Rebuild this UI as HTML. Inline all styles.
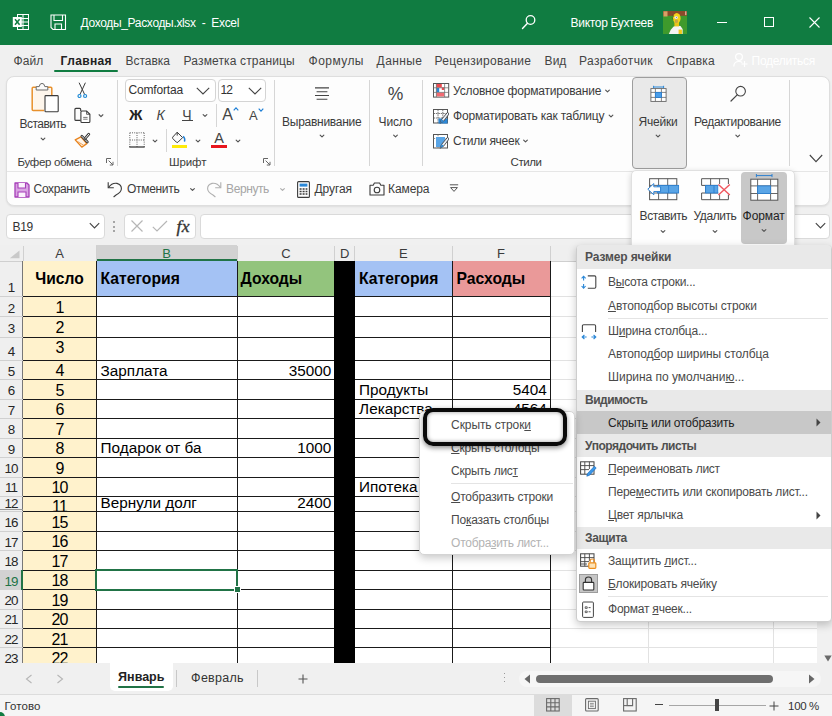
<!DOCTYPE html>
<html><head><meta charset="utf-8"><title>Excel</title>
<style>
html,body{margin:0;padding:0;}
body{width:832px;height:716px;overflow:hidden;position:relative;background:#f0f0f0;font-family:'Liberation Sans',sans-serif;}
.t{position:absolute;white-space:pre;}
u{text-decoration:underline;text-underline-offset:1px;}
</style></head><body>
<div style="position:absolute;left:0px;top:0px;width:832px;height:45px;background:#107c41;"></div>
<svg style="position:absolute;left:12px;top:13px;" width="18" height="18" viewBox="0 0 18 18">
<rect x="5.5" y="1.5" width="11" height="15" fill="none" stroke="#fff" stroke-width="1"/>
<path d="M5.5 5.5H16.5M5.5 9H16.5M5.5 12.5H16.5M11 1.5V16.5" stroke="#fff" stroke-width="1" fill="none"/>
<rect x="0.8" y="4" width="9" height="10" fill="#fff"/>
<path d="M3 6.2L7.6 11.8M7.6 6.2L3 11.8" stroke="#107c41" stroke-width="1.5" fill="none"/>
</svg>
<svg style="position:absolute;left:50px;top:14px;" width="17" height="17" viewBox="0 0 17 17">
<path d="M1 1H15.5V15.5H3L1 13.5Z" fill="none" stroke="#fff" stroke-width="1.1"/>
<path d="M4 1V6.5H12.5V1" fill="none" stroke="#fff" stroke-width="1.1"/>
<path d="M5 15.5V10H11.5V15.5" fill="none" stroke="#fff" stroke-width="1.1"/>
</svg>
<span class="t" style="left:80.6px;top:14.8px;font-size:12px;line-height:16px;color:#fff;letter-spacing:-0.34px;">Доходы_Расходы.xlsx  -  Excel</span>
<svg style="position:absolute;left:521px;top:14px;" width="16" height="16" viewBox="0 0 16 16"><circle cx="9.5" cy="6" r="4.3" fill="none" stroke="#fff" stroke-width="1.3"/><path d="M6.5 9.2L1.5 14.5" stroke="#fff" stroke-width="1.4" stroke-linecap="round"/></svg>
<span class="t" style="left:570.6px;top:14.8px;font-size:12px;line-height:16px;color:#fff;letter-spacing:-0.31px;">Виктор Бухтеев</span>
<svg style="position:absolute;left:663px;top:11px;" width="24" height="23" viewBox="0 0 24 23">
<rect width="24" height="23" fill="#3f9a2c"/>
<rect width="24" height="4.8" fill="#8a4a2a"/>
<rect x="0.5" y="0.3" width="4" height="5.2" fill="#d9a066"/>
<rect x="22" y="0.3" width="1.5" height="3.8" fill="#d9a890"/>
<path d="M5.9 23 L7.6 19 L10.4 15.8 L13 14.4 L17.5 15 L19.6 18 L19.6 23Z" fill="#f4f4f4"/>
<rect x="11.4" y="9" width="4.6" height="6.4" fill="#e8c419"/>
<ellipse cx="13.8" cy="7.2" rx="3.8" ry="5.2" fill="#f3d21b"/>
<ellipse cx="13.2" cy="6.6" rx="1.8" ry="1.4" fill="#e9e9f5"/>
<circle cx="13.6" cy="6.6" r="0.5" fill="#5566aa"/>
<rect x="11.8" y="8.4" width="3.2" height="3.8" rx="1.4" fill="#c9a640"/>
<rect x="15.6" y="18.6" width="3.3" height="4.4" fill="#efc81a"/>
<path d="M9.6 3.5L10.6 6M9 6.5L10 8.5" stroke="#5a3a1a" stroke-width="0.5"/>
</svg>
<div style="position:absolute;left:717px;top:22px;width:10px;height:1px;background:#fff;"></div>
<div style="position:absolute;left:764px;top:17px;width:9px;height:9px;border:1px solid #fff;box-sizing:border-box;width:10px;height:10px;"></div>
<svg style="position:absolute;left:809px;top:17px;" width="11" height="11" viewBox="0 0 11 11"><path d="M0.5 0.5L10.5 10.5M10.5 0.5L0.5 10.5" stroke="#fff" stroke-width="1.1"/></svg>
<span class="t" style="left:13.6px;top:52.8px;font-size:12px;line-height:16px;color:#444;letter-spacing:0.07px;">Файл</span>
<span class="t" style="left:60.6px;top:52.8px;font-size:12px;line-height:16px;color:#222;letter-spacing:0.36px;font-weight:700;">Главная</span>
<div style="position:absolute;left:54px;top:70px;width:64px;height:2px;background:#107c41;border-radius:1px;"></div>
<span class="t" style="left:125.6px;top:52.8px;font-size:12px;line-height:16px;color:#444;letter-spacing:-0.04px;">Вставка</span>
<span class="t" style="left:183.6px;top:52.8px;font-size:12px;line-height:16px;color:#444;letter-spacing:0.14px;">Разметка страницы</span>
<span class="t" style="left:308.6px;top:52.8px;font-size:12px;line-height:16px;color:#444;letter-spacing:0.44px;">Формулы</span>
<span class="t" style="left:376.6px;top:52.8px;font-size:12px;line-height:16px;color:#444;letter-spacing:0.41px;">Данные</span>
<span class="t" style="left:434.6px;top:52.8px;font-size:12px;line-height:16px;color:#444;letter-spacing:0.29px;">Рецензирование</span>
<span class="t" style="left:544.6px;top:52.8px;font-size:12px;line-height:16px;color:#444;letter-spacing:0.03px;">Вид</span>
<span class="t" style="left:579.1px;top:52.8px;font-size:12px;line-height:16px;color:#444;letter-spacing:0.35px;">Разработчик</span>
<span class="t" style="left:666.6px;top:52.8px;font-size:12px;line-height:16px;color:#444;letter-spacing:0.17px;">Справка</span>
<svg style="position:absolute;left:733px;top:52px;" width="16" height="16" viewBox="0 0 16 16"><circle cx="6" cy="5" r="3.4" fill="none" stroke="#fff" stroke-width="1.2"/><path d="M0.8 14.5C0.8 10.5 3 9.5 6 9.5C7.5 9.5 8.5 9.8 9.3 10.4" fill="none" stroke="#fff" stroke-width="1.2"/><path d="M11.5 9V15M8.5 12H14.5" stroke="#fff" stroke-width="1.2"/></svg>
<span class="t" style="left:751.6px;top:52.8px;font-size:12px;line-height:16px;color:#fff;letter-spacing:-0.30px;">Поделиться</span>
<div style="position:absolute;left:6px;top:75.6px;width:824px;height:130px;background:#fdfdfd;border:1px solid #dedede;border-radius:8px;box-sizing:border-box;box-shadow:0 1px 2px rgba(0,0,0,0.08);"></div>
<div style="position:absolute;left:7px;top:171px;width:821px;height:1px;background:#e6e6e6;"></div>
<div style="position:absolute;left:116.5px;top:80px;width:1px;height:86px;background:#d6d6d6;"></div>
<div style="position:absolute;left:274px;top:80px;width:1px;height:86px;background:#d6d6d6;"></div>
<div style="position:absolute;left:369px;top:80px;width:1px;height:86px;background:#d6d6d6;"></div>
<div style="position:absolute;left:421.5px;top:80px;width:1px;height:86px;background:#d6d6d6;"></div>
<div style="position:absolute;left:788.5px;top:80px;width:1px;height:86px;background:#d6d6d6;"></div>
<div style="position:absolute;left:5.8px;top:213.5px;width:99px;height:25px;border:1px solid #dadada;border-radius:4px;background:#fff;box-sizing:border-box;"></div>
<span class="t" style="left:12.6px;top:218.6px;font-size:12px;line-height:16px;color:#333;letter-spacing:-0.35px;">B19</span>
<svg style="position:absolute;left:89px;top:222px;" width="11" height="8" viewBox="0 0 11 8"><path d="M0.8 1.2L5.5 6L10.2 1.2" fill="none" stroke="#444" stroke-width="1.1"/></svg>
<div style="position:absolute;left:113.2px;top:221px;width:2px;height:2px;background:#8c8c8c;border-radius:1px;"></div>
<div style="position:absolute;left:113.2px;top:225.5px;width:2px;height:2px;background:#8c8c8c;border-radius:1px;"></div>
<div style="position:absolute;left:113.2px;top:230px;width:2px;height:2px;background:#8c8c8c;border-radius:1px;"></div>
<div style="position:absolute;left:124px;top:213.5px;width:71.5px;height:25px;border:1px solid #dadada;border-radius:4px;background:#fff;box-sizing:border-box;"></div>
<svg style="position:absolute;left:131px;top:220px;" width="12" height="12" viewBox="0 0 12 12"><path d="M0.5 0.5L11.5 11.5M11.5 0.5L0.5 11.5" stroke="#b6b6b6" stroke-width="1.2"/></svg>
<svg style="position:absolute;left:152px;top:220px;" width="16" height="12" viewBox="0 0 16 12"><path d="M0.8 6.8L5 11L15 1" fill="none" stroke="#b6b6b6" stroke-width="1.2"/></svg>
<span class="t" style="left:176.6px;top:215.8px;font-size:17.6px;line-height:20px;color:#333;letter-spacing:0.00px;font-style:italic;font-family:'Liberation Serif',serif;letter-spacing:0.2px;-webkit-text-stroke:0.35px #333;">fx</span>
<div style="position:absolute;left:199.5px;top:213.5px;width:630px;height:25px;border:1px solid #dadada;border-radius:4px;background:#fff;box-sizing:border-box;"></div>
<svg style="position:absolute;left:815px;top:222px;" width="11" height="8" viewBox="0 0 11 8"><path d="M0.8 1.2L5.5 6L10.2 1.2" fill="none" stroke="#444" stroke-width="1.1"/></svg>
<div style="position:absolute;left:0px;top:245px;width:832px;height:418.4px;background:#fff;"></div>
<div style="position:absolute;left:0px;top:245px;width:832px;height:16px;background:#efefef;"></div>
<div style="position:absolute;left:0px;top:261px;width:23px;height:402.4px;background:#efefef;"></div>
<svg style="position:absolute;left:9px;top:250px;" width="11" height="9" viewBox="0 0 11 9"><path d="M10.5 0.5V8.2H0.8Z" fill="#c9c9c9"/></svg>
<div style="position:absolute;left:96px;top:245px;width:141px;height:16px;background:#d2d2d2;border-bottom:2px solid #217346;box-sizing:border-box;"></div>
<div style="position:absolute;left:95.5px;top:246px;width:1px;height:15px;background:#d0d0d0;"></div>
<div style="position:absolute;left:236.5px;top:246px;width:1px;height:15px;background:#d0d0d0;"></div>
<div style="position:absolute;left:334.0px;top:246px;width:1px;height:15px;background:#d0d0d0;"></div>
<div style="position:absolute;left:354.0px;top:246px;width:1px;height:15px;background:#d0d0d0;"></div>
<div style="position:absolute;left:451.5px;top:246px;width:1px;height:15px;background:#d0d0d0;"></div>
<div style="position:absolute;left:549.5px;top:246px;width:1px;height:15px;background:#d0d0d0;"></div>
<div style="position:absolute;left:647.5px;top:246px;width:1px;height:15px;background:#d0d0d0;"></div>
<div style="position:absolute;left:773.0px;top:246px;width:1px;height:15px;background:#d0d0d0;"></div>
<div style="position:absolute;left:899.5px;top:246px;width:1px;height:15px;background:#d0d0d0;"></div>
<div style="position:absolute;left:22.5px;top:246px;width:1px;height:15px;background:#d0d0d0;"></div>
<div style="position:absolute;left:0px;top:260.5px;width:832px;height:1px;background:#cfcfcf;"></div>
<span class="t" style="left:54.6px;top:245.6px;font-size:13px;line-height:16px;color:#3b3b3b;letter-spacing:0.00px;width:10px;text-align:center;">A</span>
<span class="t" style="left:161.6px;top:245.6px;font-size:13px;line-height:16px;color:#217346;letter-spacing:0.00px;width:10px;text-align:center;">B</span>
<span class="t" style="left:280.9px;top:245.6px;font-size:13px;line-height:16px;color:#3b3b3b;letter-spacing:0.00px;width:10px;text-align:center;">C</span>
<span class="t" style="left:339.6px;top:245.6px;font-size:13px;line-height:16px;color:#3b3b3b;letter-spacing:0.00px;width:10px;text-align:center;">D</span>
<span class="t" style="left:398.4px;top:245.6px;font-size:13px;line-height:16px;color:#3b3b3b;letter-spacing:0.00px;width:10px;text-align:center;">E</span>
<span class="t" style="left:496.1px;top:245.6px;font-size:13px;line-height:16px;color:#3b3b3b;letter-spacing:0.00px;width:10px;text-align:center;">F</span>
<div style="position:absolute;left:647.5px;top:261px;width:1px;height:402.4px;background:#e2e2e2;"></div>
<div style="position:absolute;left:773.0px;top:261px;width:1px;height:402.4px;background:#e2e2e2;"></div>
<div style="position:absolute;left:899.5px;top:261px;width:1px;height:402.4px;background:#e2e2e2;"></div>
<div style="position:absolute;left:550px;top:295.9px;width:282px;height:1px;background:#e2e2e2;"></div>
<div style="position:absolute;left:550px;top:316.2px;width:282px;height:1px;background:#e2e2e2;"></div>
<div style="position:absolute;left:550px;top:336.6px;width:282px;height:1px;background:#e2e2e2;"></div>
<div style="position:absolute;left:550px;top:359.8px;width:282px;height:1px;background:#e2e2e2;"></div>
<div style="position:absolute;left:550px;top:379.3px;width:282px;height:1px;background:#e2e2e2;"></div>
<div style="position:absolute;left:550px;top:398.8px;width:282px;height:1px;background:#e2e2e2;"></div>
<div style="position:absolute;left:550px;top:418.2px;width:282px;height:1px;background:#e2e2e2;"></div>
<div style="position:absolute;left:550px;top:437.7px;width:282px;height:1px;background:#e2e2e2;"></div>
<div style="position:absolute;left:550px;top:457.2px;width:282px;height:1px;background:#e2e2e2;"></div>
<div style="position:absolute;left:550px;top:476.5px;width:282px;height:1px;background:#e2e2e2;"></div>
<div style="position:absolute;left:550px;top:495.8px;width:282px;height:1px;background:#e2e2e2;"></div>
<div style="position:absolute;left:550px;top:511.2px;width:282px;height:1px;background:#e2e2e2;"></div>
<div style="position:absolute;left:550px;top:530.8px;width:282px;height:1px;background:#e2e2e2;"></div>
<div style="position:absolute;left:550px;top:550.3px;width:282px;height:1px;background:#e2e2e2;"></div>
<div style="position:absolute;left:550px;top:569.7px;width:282px;height:1px;background:#e2e2e2;"></div>
<div style="position:absolute;left:550px;top:589.2px;width:282px;height:1px;background:#e2e2e2;"></div>
<div style="position:absolute;left:550px;top:608.6px;width:282px;height:1px;background:#e2e2e2;"></div>
<div style="position:absolute;left:550px;top:628.0px;width:282px;height:1px;background:#e2e2e2;"></div>
<div style="position:absolute;left:550px;top:647.1px;width:282px;height:1px;background:#e2e2e2;"></div>
<div style="position:absolute;left:550px;top:666.5px;width:282px;height:1px;background:#e2e2e2;"></div>
<div style="position:absolute;left:23px;top:261px;width:73px;height:402.4px;background:#fff2cc;"></div>
<div style="position:absolute;left:96px;top:261px;width:141px;height:35px;background:#a4c2f4;"></div>
<div style="position:absolute;left:237px;top:261px;width:97.5px;height:35px;background:#93c47d;"></div>
<div style="position:absolute;left:354.5px;top:261px;width:97.5px;height:35px;background:#a4c2f4;"></div>
<div style="position:absolute;left:452px;top:261px;width:98px;height:35px;background:#ea9999;"></div>
<div style="position:absolute;left:23px;top:295.9px;width:527.5px;height:1px;background:#1a1a1a;"></div>
<div style="position:absolute;left:23px;top:316.2px;width:527.5px;height:1px;background:#1a1a1a;"></div>
<div style="position:absolute;left:23px;top:336.6px;width:527.5px;height:1px;background:#1a1a1a;"></div>
<div style="position:absolute;left:23px;top:359.8px;width:527.5px;height:1px;background:#1a1a1a;"></div>
<div style="position:absolute;left:23px;top:379.3px;width:527.5px;height:1px;background:#1a1a1a;"></div>
<div style="position:absolute;left:23px;top:398.8px;width:527.5px;height:1px;background:#1a1a1a;"></div>
<div style="position:absolute;left:23px;top:418.2px;width:527.5px;height:1px;background:#1a1a1a;"></div>
<div style="position:absolute;left:23px;top:437.7px;width:527.5px;height:1px;background:#1a1a1a;"></div>
<div style="position:absolute;left:23px;top:457.2px;width:527.5px;height:1px;background:#1a1a1a;"></div>
<div style="position:absolute;left:23px;top:476.5px;width:527.5px;height:1px;background:#1a1a1a;"></div>
<div style="position:absolute;left:23px;top:495.8px;width:527.5px;height:1px;background:#1a1a1a;"></div>
<div style="position:absolute;left:23px;top:511.2px;width:527.5px;height:1px;background:#1a1a1a;"></div>
<div style="position:absolute;left:23px;top:530.8px;width:527.5px;height:1px;background:#1a1a1a;"></div>
<div style="position:absolute;left:23px;top:550.3px;width:527.5px;height:1px;background:#1a1a1a;"></div>
<div style="position:absolute;left:23px;top:569.7px;width:527.5px;height:1px;background:#1a1a1a;"></div>
<div style="position:absolute;left:23px;top:589.2px;width:527.5px;height:1px;background:#1a1a1a;"></div>
<div style="position:absolute;left:23px;top:608.6px;width:527.5px;height:1px;background:#1a1a1a;"></div>
<div style="position:absolute;left:23px;top:628.0px;width:527.5px;height:1px;background:#1a1a1a;"></div>
<div style="position:absolute;left:23px;top:647.1px;width:527.5px;height:1px;background:#1a1a1a;"></div>
<div style="position:absolute;left:95.5px;top:261px;width:1px;height:402.4px;background:#1a1a1a;"></div>
<div style="position:absolute;left:236.5px;top:261px;width:1px;height:402.4px;background:#1a1a1a;"></div>
<div style="position:absolute;left:354.0px;top:261px;width:1px;height:402.4px;background:#1a1a1a;"></div>
<div style="position:absolute;left:451.5px;top:261px;width:1px;height:402.4px;background:#1a1a1a;"></div>
<div style="position:absolute;left:549.5px;top:261px;width:1px;height:402.4px;background:#1a1a1a;"></div>
<div style="position:absolute;left:22.4px;top:261px;width:1px;height:402.4px;background:#777;"></div>
<div style="position:absolute;left:334.2px;top:261px;width:20.6px;height:402.4px;background:#000;"></div>
<div style="position:absolute;left:0px;top:295.9px;width:22.5px;height:1px;background:#d0d0d0;"></div>
<div style="position:absolute;left:0;top:261.3px;width:22.5px;height:35.099999999999966px;overflow:hidden;"><span class="t" style="left:0;width:22px;text-align:center;top:19.0px;font-size:13.4px;line-height:16px;letter-spacing:-0.85px;color:#262626">1</span></div>
<div style="position:absolute;left:0px;top:316.2px;width:22.5px;height:1px;background:#d0d0d0;"></div>
<div style="position:absolute;left:0;top:296.4px;width:22.5px;height:20.30000000000001px;overflow:hidden;"><span class="t" style="left:0;width:22px;text-align:center;top:4.2px;font-size:13.4px;line-height:16px;letter-spacing:-0.85px;color:#262626">2</span></div>
<div style="position:absolute;left:0px;top:336.6px;width:22.5px;height:1px;background:#d0d0d0;"></div>
<div style="position:absolute;left:0;top:316.7px;width:22.5px;height:20.400000000000034px;overflow:hidden;"><span class="t" style="left:0;width:22px;text-align:center;top:4.3px;font-size:13.4px;line-height:16px;letter-spacing:-0.85px;color:#262626">3</span></div>
<div style="position:absolute;left:0px;top:359.8px;width:22.5px;height:1px;background:#d0d0d0;"></div>
<div style="position:absolute;left:0;top:337.1px;width:22.5px;height:23.19999999999999px;overflow:hidden;"><span class="t" style="left:0;width:22px;text-align:center;top:7.1px;font-size:13.4px;line-height:16px;letter-spacing:-0.85px;color:#262626">4</span></div>
<div style="position:absolute;left:0px;top:379.3px;width:22.5px;height:1px;background:#d0d0d0;"></div>
<div style="position:absolute;left:0;top:360.3px;width:22.5px;height:19.5px;overflow:hidden;"><span class="t" style="left:0;width:22px;text-align:center;top:3.4px;font-size:13.4px;line-height:16px;letter-spacing:-0.85px;color:#262626">5</span></div>
<div style="position:absolute;left:0px;top:398.8px;width:22.5px;height:1px;background:#d0d0d0;"></div>
<div style="position:absolute;left:0;top:379.8px;width:22.5px;height:19.5px;overflow:hidden;"><span class="t" style="left:0;width:22px;text-align:center;top:3.4px;font-size:13.4px;line-height:16px;letter-spacing:-0.85px;color:#262626">6</span></div>
<div style="position:absolute;left:0px;top:418.2px;width:22.5px;height:1px;background:#d0d0d0;"></div>
<div style="position:absolute;left:0;top:399.3px;width:22.5px;height:19.399999999999977px;overflow:hidden;"><span class="t" style="left:0;width:22px;text-align:center;top:3.3px;font-size:13.4px;line-height:16px;letter-spacing:-0.85px;color:#262626">7</span></div>
<div style="position:absolute;left:0px;top:437.7px;width:22.5px;height:1px;background:#d0d0d0;"></div>
<div style="position:absolute;left:0;top:418.7px;width:22.5px;height:19.5px;overflow:hidden;"><span class="t" style="left:0;width:22px;text-align:center;top:3.4px;font-size:13.4px;line-height:16px;letter-spacing:-0.85px;color:#262626">8</span></div>
<div style="position:absolute;left:0px;top:457.2px;width:22.5px;height:1px;background:#d0d0d0;"></div>
<div style="position:absolute;left:0;top:438.2px;width:22.5px;height:19.5px;overflow:hidden;"><span class="t" style="left:0;width:22px;text-align:center;top:3.4px;font-size:13.4px;line-height:16px;letter-spacing:-0.85px;color:#262626">9</span></div>
<div style="position:absolute;left:0px;top:476.5px;width:22.5px;height:1px;background:#d0d0d0;"></div>
<div style="position:absolute;left:0;top:457.7px;width:22.5px;height:19.30000000000001px;overflow:hidden;"><span class="t" style="left:0;width:22px;text-align:center;top:3.2px;font-size:13.4px;line-height:16px;letter-spacing:-0.85px;color:#262626">10</span></div>
<div style="position:absolute;left:0px;top:495.8px;width:22.5px;height:1px;background:#d0d0d0;"></div>
<div style="position:absolute;left:0;top:477px;width:22.5px;height:19.30000000000001px;overflow:hidden;"><span class="t" style="left:0;width:22px;text-align:center;top:3.2px;font-size:13.4px;line-height:16px;letter-spacing:-0.85px;color:#262626">11</span></div>
<div style="position:absolute;left:0px;top:511.2px;width:22.5px;height:1px;background:#d0d0d0;"></div>
<div style="position:absolute;left:0;top:496.3px;width:22.5px;height:15.399999999999977px;overflow:hidden;"><span class="t" style="left:0;width:22px;text-align:center;top:-0.7px;font-size:13.4px;line-height:16px;letter-spacing:-0.85px;color:#262626">12</span></div>
<div style="position:absolute;left:0px;top:530.8px;width:22.5px;height:1px;background:#d0d0d0;"></div>
<div style="position:absolute;left:0;top:511.7px;width:22.5px;height:19.599999999999966px;overflow:hidden;"><span class="t" style="left:0;width:22px;text-align:center;top:3.5px;font-size:13.4px;line-height:16px;letter-spacing:-0.85px;color:#262626">16</span></div>
<div style="position:absolute;left:0px;top:550.3px;width:22.5px;height:1px;background:#d0d0d0;"></div>
<div style="position:absolute;left:0;top:531.3px;width:22.5px;height:19.5px;overflow:hidden;"><span class="t" style="left:0;width:22px;text-align:center;top:3.4px;font-size:13.4px;line-height:16px;letter-spacing:-0.85px;color:#262626">17</span></div>
<div style="position:absolute;left:0px;top:569.7px;width:22.5px;height:1px;background:#d0d0d0;"></div>
<div style="position:absolute;left:0;top:550.8px;width:22.5px;height:19.40000000000009px;overflow:hidden;"><span class="t" style="left:0;width:22px;text-align:center;top:3.3px;font-size:13.4px;line-height:16px;letter-spacing:-0.85px;color:#262626">18</span></div>
<div style="position:absolute;left:0px;top:570.2px;width:22.5px;height:19.5px;background:#d2d2d2;"></div>
<div style="position:absolute;left:21px;top:570.2px;width:2px;height:19.5px;background:#217346;"></div>
<div style="position:absolute;left:0;top:570.2px;width:22.5px;height:19.5px;overflow:hidden;"><span class="t" style="left:0;width:22px;text-align:center;top:3.4px;font-size:13.4px;line-height:16px;letter-spacing:-0.85px;color:#217346">19</span></div>
<div style="position:absolute;left:0px;top:608.6px;width:22.5px;height:1px;background:#d0d0d0;"></div>
<div style="position:absolute;left:0;top:589.7px;width:22.5px;height:19.399999999999977px;overflow:hidden;"><span class="t" style="left:0;width:22px;text-align:center;top:3.3px;font-size:13.4px;line-height:16px;letter-spacing:-0.85px;color:#262626">20</span></div>
<div style="position:absolute;left:0px;top:628.0px;width:22.5px;height:1px;background:#d0d0d0;"></div>
<div style="position:absolute;left:0;top:609.1px;width:22.5px;height:19.399999999999977px;overflow:hidden;"><span class="t" style="left:0;width:22px;text-align:center;top:3.3px;font-size:13.4px;line-height:16px;letter-spacing:-0.85px;color:#262626">21</span></div>
<div style="position:absolute;left:0px;top:647.1px;width:22.5px;height:1px;background:#d0d0d0;"></div>
<div style="position:absolute;left:0;top:628.5px;width:22.5px;height:19.100000000000023px;overflow:hidden;"><span class="t" style="left:0;width:22px;text-align:center;top:3.0px;font-size:13.4px;line-height:16px;letter-spacing:-0.85px;color:#262626">22</span></div>
<div style="position:absolute;left:0px;top:666.5px;width:22.5px;height:1px;background:#d0d0d0;"></div>
<div style="position:absolute;left:0;top:647.6px;width:22.5px;height:15.799999999999955px;overflow:hidden;"><span class="t" style="left:0;width:22px;text-align:center;top:3.3px;font-size:13.4px;line-height:16px;letter-spacing:-0.85px;color:#262626">23</span></div>
<div style="position:absolute;left:0px;top:509.2px;width:22.5px;height:1px;background:#9a9a9a;"></div>
<div style="position:absolute;left:23.6px;top:261.90000000000003px;width:71.8px;height:33.89999999999996px;overflow:hidden;"><span class="t" style="left:0px;width:71.8px;box-sizing:border-box;text-align:center;top:8.6px;font-size:15.6px;line-height:18px;letter-spacing:0px;color:#000;font-weight:700;">Число</span></div>
<div style="position:absolute;left:96.6px;top:261.90000000000003px;width:139.8px;height:33.89999999999996px;overflow:hidden;"><span class="t" style="left:0px;width:139.8px;box-sizing:border-box;padding-left:4px;text-align:left;top:8.6px;font-size:15.7px;line-height:18px;letter-spacing:0px;color:#000;font-weight:700;">Категория</span></div>
<div style="position:absolute;left:237.6px;top:261.90000000000003px;width:96.3px;height:33.89999999999996px;overflow:hidden;"><span class="t" style="left:-1px;width:96.3px;box-sizing:border-box;padding-left:4px;text-align:left;top:8.6px;font-size:15.7px;line-height:18px;letter-spacing:0px;color:#000;font-weight:700;">Доходы</span></div>
<div style="position:absolute;left:355.1px;top:261.90000000000003px;width:96.3px;height:33.89999999999996px;overflow:hidden;"><span class="t" style="left:0px;width:96.3px;box-sizing:border-box;padding-left:4px;text-align:left;top:8.6px;font-size:15.7px;line-height:18px;letter-spacing:0px;color:#000;font-weight:700;">Категория</span></div>
<div style="position:absolute;left:452.6px;top:261.90000000000003px;width:96.8px;height:33.89999999999996px;overflow:hidden;"><span class="t" style="left:0px;width:96.8px;box-sizing:border-box;padding-left:4px;text-align:left;top:8.6px;font-size:15.7px;line-height:18px;letter-spacing:0px;color:#000;font-weight:700;">Расходы</span></div>
<div style="position:absolute;left:23.6px;top:297.0px;width:71.8px;height:19.100000000000012px;overflow:hidden;"><span class="t" style="left:0px;width:71.8px;box-sizing:border-box;text-align:center;top:1.5px;font-size:16px;line-height:18px;letter-spacing:-0.9px;color:#000;">1</span></div>
<div style="position:absolute;left:23.6px;top:317.3px;width:71.8px;height:19.200000000000035px;overflow:hidden;"><span class="t" style="left:0px;width:71.8px;box-sizing:border-box;text-align:center;top:1.5px;font-size:16px;line-height:18px;letter-spacing:-0.9px;color:#000;">2</span></div>
<div style="position:absolute;left:23.6px;top:337.70000000000005px;width:71.8px;height:21.99999999999999px;overflow:hidden;"><span class="t" style="left:0px;width:71.8px;box-sizing:border-box;text-align:center;top:1.5px;font-size:16px;line-height:18px;letter-spacing:-0.9px;color:#000;">3</span></div>
<div style="position:absolute;left:23.6px;top:360.90000000000003px;width:71.8px;height:18.3px;overflow:hidden;"><span class="t" style="left:0px;width:71.8px;box-sizing:border-box;text-align:center;top:1.5px;font-size:16px;line-height:18px;letter-spacing:-0.9px;color:#000;">4</span></div>
<div style="position:absolute;left:23.6px;top:380.40000000000003px;width:71.8px;height:18.3px;overflow:hidden;"><span class="t" style="left:0px;width:71.8px;box-sizing:border-box;text-align:center;top:1.5px;font-size:16px;line-height:18px;letter-spacing:-0.9px;color:#000;">5</span></div>
<div style="position:absolute;left:23.6px;top:399.90000000000003px;width:71.8px;height:18.199999999999978px;overflow:hidden;"><span class="t" style="left:0px;width:71.8px;box-sizing:border-box;text-align:center;top:1.5px;font-size:16px;line-height:18px;letter-spacing:-0.9px;color:#000;">6</span></div>
<div style="position:absolute;left:23.6px;top:419.3px;width:71.8px;height:18.3px;overflow:hidden;"><span class="t" style="left:0px;width:71.8px;box-sizing:border-box;text-align:center;top:1.5px;font-size:16px;line-height:18px;letter-spacing:-0.9px;color:#000;">7</span></div>
<div style="position:absolute;left:23.6px;top:438.8px;width:71.8px;height:18.3px;overflow:hidden;"><span class="t" style="left:0px;width:71.8px;box-sizing:border-box;text-align:center;top:1.5px;font-size:16px;line-height:18px;letter-spacing:-0.9px;color:#000;">8</span></div>
<div style="position:absolute;left:23.6px;top:458.3px;width:71.8px;height:18.100000000000012px;overflow:hidden;"><span class="t" style="left:0px;width:71.8px;box-sizing:border-box;text-align:center;top:1.5px;font-size:16px;line-height:18px;letter-spacing:-0.9px;color:#000;">9</span></div>
<div style="position:absolute;left:23.6px;top:477.6px;width:71.8px;height:18.100000000000012px;overflow:hidden;"><span class="t" style="left:0px;width:71.8px;box-sizing:border-box;text-align:center;top:1.5px;font-size:16px;line-height:18px;letter-spacing:-0.9px;color:#000;">10</span></div>
<div style="position:absolute;left:23.6px;top:496.90000000000003px;width:71.8px;height:14.199999999999978px;overflow:hidden;"><span class="t" style="left:0px;width:71.8px;box-sizing:border-box;text-align:center;top:1.5px;font-size:16px;line-height:18px;letter-spacing:-0.9px;color:#000;">11</span></div>
<div style="position:absolute;left:23.6px;top:512.3px;width:71.8px;height:18.399999999999967px;overflow:hidden;"><span class="t" style="left:0px;width:71.8px;box-sizing:border-box;text-align:center;top:1.5px;font-size:16px;line-height:18px;letter-spacing:-0.9px;color:#000;">15</span></div>
<div style="position:absolute;left:23.6px;top:531.9px;width:71.8px;height:18.3px;overflow:hidden;"><span class="t" style="left:0px;width:71.8px;box-sizing:border-box;text-align:center;top:1.5px;font-size:16px;line-height:18px;letter-spacing:-0.9px;color:#000;">16</span></div>
<div style="position:absolute;left:23.6px;top:551.4px;width:71.8px;height:18.20000000000009px;overflow:hidden;"><span class="t" style="left:0px;width:71.8px;box-sizing:border-box;text-align:center;top:1.5px;font-size:16px;line-height:18px;letter-spacing:-0.9px;color:#000;">17</span></div>
<div style="position:absolute;left:23.6px;top:570.8000000000001px;width:71.8px;height:18.3px;overflow:hidden;"><span class="t" style="left:0px;width:71.8px;box-sizing:border-box;text-align:center;top:1.5px;font-size:16px;line-height:18px;letter-spacing:-0.9px;color:#000;">18</span></div>
<div style="position:absolute;left:23.6px;top:590.3000000000001px;width:71.8px;height:18.199999999999978px;overflow:hidden;"><span class="t" style="left:0px;width:71.8px;box-sizing:border-box;text-align:center;top:1.5px;font-size:16px;line-height:18px;letter-spacing:-0.9px;color:#000;">19</span></div>
<div style="position:absolute;left:23.6px;top:609.7px;width:71.8px;height:18.199999999999978px;overflow:hidden;"><span class="t" style="left:0px;width:71.8px;box-sizing:border-box;text-align:center;top:1.5px;font-size:16px;line-height:18px;letter-spacing:-0.9px;color:#000;">20</span></div>
<div style="position:absolute;left:23.6px;top:629.1px;width:71.8px;height:17.900000000000023px;overflow:hidden;"><span class="t" style="left:0px;width:71.8px;box-sizing:border-box;text-align:center;top:1.5px;font-size:16px;line-height:18px;letter-spacing:-0.9px;color:#000;">21</span></div>
<div style="position:absolute;left:23.6px;top:648.2px;width:71.8px;height:14.599999999999955px;overflow:hidden;"><span class="t" style="left:0px;width:71.8px;box-sizing:border-box;text-align:center;top:1.5px;font-size:16px;line-height:18px;letter-spacing:-0.9px;color:#000;">22</span></div>
<div style="position:absolute;left:96.6px;top:360.90000000000003px;width:139.8px;height:18.3px;overflow:hidden;"><span class="t" style="left:0px;width:139.8px;box-sizing:border-box;padding-left:4px;text-align:left;top:0.7px;font-size:15.3px;line-height:18px;letter-spacing:0px;color:#000;">Зарплата</span></div>
<div style="position:absolute;left:237.6px;top:360.90000000000003px;width:96.3px;height:18.3px;overflow:hidden;"><span class="t" style="left:0px;width:96.3px;box-sizing:border-box;padding-right:2.6px;text-align:right;top:0.7px;font-size:15.3px;line-height:18px;letter-spacing:0px;color:#000;">35000</span></div>
<div style="position:absolute;left:96.6px;top:438.8px;width:139.8px;height:18.3px;overflow:hidden;"><span class="t" style="left:0px;width:139.8px;box-sizing:border-box;padding-left:4px;text-align:left;top:0.7px;font-size:15.3px;line-height:18px;letter-spacing:0px;color:#000;">Подарок от ба</span></div>
<div style="position:absolute;left:237.6px;top:438.8px;width:96.3px;height:18.3px;overflow:hidden;"><span class="t" style="left:0px;width:96.3px;box-sizing:border-box;padding-right:2.6px;text-align:right;top:0.7px;font-size:15.3px;line-height:18px;letter-spacing:0px;color:#000;">1000</span></div>
<div style="position:absolute;left:96.6px;top:496.90000000000003px;width:139.8px;height:14.199999999999978px;overflow:hidden;"><span class="t" style="left:0px;width:139.8px;box-sizing:border-box;padding-left:4px;text-align:left;top:-3.4px;font-size:15.3px;line-height:18px;letter-spacing:0px;color:#000;">Вернули долг</span></div>
<div style="position:absolute;left:237.6px;top:496.90000000000003px;width:96.3px;height:14.199999999999978px;overflow:hidden;"><span class="t" style="left:0px;width:96.3px;box-sizing:border-box;padding-right:2.6px;text-align:right;top:-3.4px;font-size:15.3px;line-height:18px;letter-spacing:0px;color:#000;">2400</span></div>
<div style="position:absolute;left:355.1px;top:380.40000000000003px;width:96.3px;height:18.3px;overflow:hidden;"><span class="t" style="left:0px;width:96.3px;box-sizing:border-box;padding-left:4px;text-align:left;top:0.7px;font-size:15.3px;line-height:18px;letter-spacing:0px;color:#000;">Продукты</span></div>
<div style="position:absolute;left:452.6px;top:380.40000000000003px;width:96.8px;height:18.3px;overflow:hidden;"><span class="t" style="left:0px;width:96.8px;box-sizing:border-box;padding-right:2.6px;text-align:right;top:0.7px;font-size:15.3px;line-height:18px;letter-spacing:0px;color:#000;">5404</span></div>
<div style="position:absolute;left:355.1px;top:399.90000000000003px;width:96.3px;height:18.199999999999978px;overflow:hidden;"><span class="t" style="left:0px;width:96.3px;box-sizing:border-box;padding-left:4px;text-align:left;top:0.6px;font-size:15.3px;line-height:18px;letter-spacing:0px;color:#000;">Лекарства</span></div>
<div style="position:absolute;left:452.6px;top:399.90000000000003px;width:96.8px;height:18.199999999999978px;overflow:hidden;"><span class="t" style="left:0px;width:96.8px;box-sizing:border-box;padding-right:2.6px;text-align:right;top:0.6px;font-size:15.3px;line-height:18px;letter-spacing:0px;color:#000;">4564</span></div>
<div style="position:absolute;left:355.1px;top:477.6px;width:96.3px;height:18.100000000000012px;overflow:hidden;"><span class="t" style="left:0px;width:96.3px;box-sizing:border-box;padding-left:4px;text-align:left;top:0.5px;font-size:15.3px;line-height:18px;letter-spacing:0px;color:#000;">Ипотека</span></div>
<div style="position:absolute;left:95px;top:569px;width:143px;height:21.6px;border:2px solid #217346;box-sizing:border-box;"></div>
<div style="position:absolute;left:233.6px;top:586px;width:5px;height:5px;background:#217346;border:1px solid #fff;box-sizing:content-box;"></div>
<div style="position:absolute;left:817px;top:245px;width:15px;height:418.4px;background:#f1f1f1;"></div>
<svg style="position:absolute;left:823.5px;top:655px;" width="8" height="7" viewBox="0 0 8 7"><path d="M0.3 0.5H7.7L4 6.5Z" fill="#6a6a6a"/></svg>
<div style="position:absolute;left:0px;top:663.4px;width:832px;height:32px;background:#f0f0f0;border-bottom:1px solid #dcdcdc;box-sizing:border-box;"></div>
<div style="position:absolute;left:110px;top:663.4px;width:63px;height:27.2px;background:#fff;border-radius:0 0 5px 5px;"></div>
<svg style="position:absolute;left:25px;top:673.5px;" width="8" height="10" viewBox="0 0 8 10"><path d="M6.5 1L1.5 5L6.5 9" fill="none" stroke="#b5b5b5" stroke-width="1.1"/></svg>
<svg style="position:absolute;left:56px;top:673.5px;" width="8" height="10" viewBox="0 0 8 10"><path d="M1.5 1L6.5 5L1.5 9" fill="none" stroke="#b5b5b5" stroke-width="1.1"/></svg>
<span class="t" style="left:118.1px;top:668.5px;font-size:12.5px;line-height:16px;color:#222;letter-spacing:-0.00px;font-weight:700;">Январь</span>
<div style="position:absolute;left:118px;top:685.5px;width:46px;height:2px;background:#217346;border-radius:1px;"></div>
<div style="position:absolute;left:176px;top:670.4px;width:1px;height:17px;background:#c8c8c8;"></div>
<span class="t" style="left:191.1px;top:670.0px;font-size:12.5px;line-height:16px;color:#333;letter-spacing:0.28px;">Февраль</span>
<div style="position:absolute;left:256.5px;top:670.4px;width:1px;height:17px;background:#c8c8c8;"></div>
<svg style="position:absolute;left:298px;top:673.5px;" width="10" height="10" viewBox="0 0 10 10"><path d="M5 0.5V9.5M0.5 5H9.5" stroke="#555" stroke-width="1.1"/></svg>
<div style="position:absolute;left:519px;top:670.5px;width:302px;height:16.5px;background:#f6f6f6;border-radius:8px;"></div>
<div style="position:absolute;left:503.5px;top:673px;width:1.2px;height:1.2px;background:#999;"></div>
<div style="position:absolute;left:503.5px;top:677px;width:1.2px;height:1.2px;background:#999;"></div>
<div style="position:absolute;left:503.5px;top:681px;width:1.2px;height:1.2px;background:#999;"></div>
<svg style="position:absolute;left:524px;top:674px;" width="7" height="10" viewBox="0 0 7 10"><path d="M6 0.5V9.5L0.5 5Z" fill="#666"/></svg>
<div style="position:absolute;left:536px;top:674.8px;width:236.5px;height:8.6px;background:#6e6e6e;border-radius:4.3px;"></div>
<svg style="position:absolute;left:808px;top:674px;" width="7" height="10" viewBox="0 0 7 10"><path d="M1 0.5V9.5L6.5 5Z" fill="#666"/></svg>
<div style="position:absolute;left:0px;top:695.4px;width:832px;height:21px;background:#f5f5f5;"></div>
<span class="t" style="left:4.6px;top:698.0px;font-size:11.5px;line-height:16px;color:#333;letter-spacing:0.05px;">Готово</span>
<div style="position:absolute;left:0px;top:712px;width:5px;height:8px;background:#107c41;border-radius:0 6px 0 0;"></div>
<div style="position:absolute;left:533.8px;top:695.2px;width:38px;height:21px;background:#dcdcdc;"></div>
<svg style="position:absolute;left:545.5px;top:698px;" width="14" height="14" viewBox="0 0 14 14"><rect x="0.6" y="0.6" width="12.6" height="12.4" fill="none" stroke="#6a6a6a" stroke-width="1.1"/><path d="M0.6 4.7H13.2M0.6 8.9H13.2M4.8 0.6V13M9 0.6V13" stroke="#6a6a6a" stroke-width="1.1" fill="none"/></svg>
<svg style="position:absolute;left:584.5px;top:698px;" width="14" height="14" viewBox="0 0 14 14"><rect x="0.6" y="0.6" width="12.6" height="12.4" rx="1" fill="none" stroke="#6a6a6a" stroke-width="1.1"/><rect x="3.4" y="3.2" width="7" height="7.4" fill="none" stroke="#6a6a6a" stroke-width="0.9"/><path d="M5 5.4H8.8M5 7H8.8M5 8.6H8.8" stroke="#6a6a6a" stroke-width="0.7"/></svg>
<svg style="position:absolute;left:623.3px;top:698px;" width="14" height="14" viewBox="0 0 14 14"><rect x="0.6" y="0.6" width="12.6" height="12.4" fill="none" stroke="#6a6a6a" stroke-width="1.1"/><path d="M4.2 0.6V7.6H9.6V0.6" fill="none" stroke="#6a6a6a" stroke-width="1.1"/><path d="M0.6 7.6H4.2" stroke="#6a6a6a" stroke-width="1.1"/></svg>
<div style="position:absolute;left:655.2px;top:704.4px;width:7.6px;height:1.1px;background:#444;"></div>
<div style="position:absolute;left:668.5px;top:704.6px;width:97.5px;height:1px;background:#a6a6a6;"></div>
<div style="position:absolute;left:714.8px;top:699px;width:4.2px;height:11.6px;background:#444;"></div>
<svg style="position:absolute;left:769px;top:701px;" width="10" height="10" viewBox="0 0 10 10"><path d="M5 0.5V9.5M0.5 5H9.5" stroke="#444" stroke-width="1"/></svg>
<span class="t" style="left:788.1px;top:698.0px;font-size:11.5px;line-height:16px;color:#333;letter-spacing:-0.36px;">100 %</span>
<svg style="position:absolute;left:31px;top:82px;" width="29" height="31" viewBox="0 0 29 31">
<path d="M2.2 5.2H19.8V28.6H2.2Z" fill="#fef6ec"/><path d="M5.5 5.2H2.2Q1.2 5.2 1.2 6.2V27.6Q1.2 28.6 2.2 28.6H13" fill="none" stroke="#e8912d" stroke-width="1.5"/>
<path d="M16.5 5.2H19.8Q20.8 5.2 20.8 6.2V13" fill="none" stroke="#e8912d" stroke-width="1.5"/>
<path d="M5.2 8V4.6H8.2Q8.6 1.4 11 1.4Q13.4 1.4 13.8 4.6H16.8V8Z" fill="#fbfbfb" stroke="#6a6a6a" stroke-width="1"/>
<rect x="14" y="13.6" width="13.2" height="16.2" rx="0.8" fill="#fff" stroke="#3b3b3b" stroke-width="1.1"/>
</svg>
<span class="t" style="left:19.6px;top:115.5px;font-size:12px;line-height:16px;color:#3b3b3b;letter-spacing:-0.55px;">Вставить</span>
<svg style="position:absolute;left:0;top:0;overflow:visible" width="1" height="1"><path d="M41.15 138.05 L43 139.95 L44.85 138.05" fill="none" stroke="#555" stroke-width="1.15" stroke-linecap="round" stroke-linejoin="round"/></svg>
<svg style="position:absolute;left:76px;top:82px;" width="13" height="17" viewBox="0 0 13 17">
<path d="M3.1 0.7L8.6 12.4M9.4 0.7L4 12.4" stroke="#3b3b3b" stroke-width="1" fill="none"/>
<circle cx="3.5" cy="14" r="1.5" fill="none" stroke="#1e8ad6" stroke-width="1.2"/>
<circle cx="9.1" cy="14" r="1.5" fill="none" stroke="#1e8ad6" stroke-width="1.2"/>
</svg>
<svg style="position:absolute;left:74px;top:107px;" width="17" height="17" viewBox="0 0 17 17">
<path d="M6.7 13.4H1.9Q0.9 13.4 0.9 12.4V2.4Q0.9 1.4 1.9 1.4H5.7Q6.7 1.4 6.7 2.4V4" fill="none" stroke="#3b3b3b" stroke-width="1.1"/>
<path d="M6.9 5Q6.9 4 7.9 4H12.6L15.9 7.3V14.5Q15.9 15.5 14.9 15.5H7.9Q6.9 15.5 6.9 14.5Z" fill="#fff" stroke="#3b3b3b" stroke-width="1.1"/>
<path d="M12.6 4V7.3H15.9" fill="none" stroke="#3b3b3b" stroke-width="0.8"/>
<path d="M9.2 10.4H13.6M9.2 12.2H13.6" stroke="#555" stroke-width="0.8"/>
</svg>
<svg style="position:absolute;left:0;top:0;overflow:visible" width="1" height="1"><path d="M99.15 114.75 L101 116.65 L102.85 114.75" fill="none" stroke="#555" stroke-width="1.15" stroke-linecap="round" stroke-linejoin="round"/></svg>
<svg style="position:absolute;left:74px;top:132px;" width="17" height="17" viewBox="0 0 17 17">
<path d="M1.2 7.8L6.9 4.9L12.8 11.6L7.8 15.1Z" fill="#fff5ea" stroke="#e8831d" stroke-width="1.3" stroke-linejoin="round"/>
<path d="M3.4 9.4L9.8 13.4" stroke="#f0a458" stroke-width="1"/>
<path d="M7.8 4.2L13.4 10" stroke="#3b3b3b" stroke-width="2.6" stroke-linecap="round"/>
<path d="M7.8 4.2L13.4 10" stroke="#fbfbfb" stroke-width="0.9" stroke-linecap="round"/>
<path d="M11.2 6.4L14.8 2.2" stroke="#3b3b3b" stroke-width="2.8" stroke-linecap="round"/>
<path d="M11.4 6.2L14.8 2.2" stroke="#fbfbfb" stroke-width="1" stroke-linecap="round"/>
</svg>
<span class="t" style="left:17.6px;top:154.0px;font-size:11.5px;line-height:16px;color:#3b3b3b;letter-spacing:-0.34px;">Буфер обмена</span>
<svg style="position:absolute;left:106px;top:158px;" width="8" height="8" viewBox="0 0 8 8"><path d="M0.5 5V0.5H5" fill="none" stroke="#666" stroke-width="1"/><path d="M2.6 2.6L7 7M7 3.8V7H3.8" fill="none" stroke="#666" stroke-width="1"/></svg>
<div style="position:absolute;left:125px;top:79px;width:90.5px;height:22.5px;border:1px solid #d4d4d4;border-radius:4px;background:#fff;box-sizing:border-box;"></div>
<div style="position:absolute;left:217.5px;top:79px;width:48.5px;height:22.5px;border:1px solid #d4d4d4;border-radius:4px;background:#fff;box-sizing:border-box;"></div>
<span class="t" style="left:128.6px;top:82.0px;font-size:12px;line-height:16px;color:#333;letter-spacing:-0.19px;">Comfortaa</span>
<svg style="position:absolute;left:196px;top:86.5px;" width="14" height="8" viewBox="0 0 14 8"><path d="M0.8 0.8L7 7L13.2 0.8" fill="none" stroke="#444" stroke-width="1.1"/></svg>
<span class="t" style="left:220.4px;top:82.0px;font-size:12px;line-height:16px;color:#333;letter-spacing:-0.88px;">12</span>
<svg style="position:absolute;left:248px;top:86.5px;" width="14" height="8" viewBox="0 0 14 8"><path d="M0.8 0.8L7 7L13.2 0.8" fill="none" stroke="#444" stroke-width="1.1"/></svg>
<span class="t" style="left:129.2px;top:107.3px;font-size:14.5px;line-height:16px;color:#222;letter-spacing:0.00px;font-weight:700;">Ж</span>
<span class="t" style="left:156.6px;top:107.3px;font-size:14px;line-height:16px;color:#444;letter-spacing:0.00px;font-style:italic;">К</span>
<span class="t" style="left:182.2px;top:107.0px;font-size:14px;line-height:16px;color:#444;letter-spacing:0.00px;">Ч</span>
<div style="position:absolute;left:182px;top:120.2px;width:10.5px;height:1px;background:#444;"></div>
<svg style="position:absolute;left:0;top:0;overflow:visible" width="1" height="1"><path d="M203.15 114.55 L205 116.45 L206.85 114.55" fill="none" stroke="#555" stroke-width="1.15" stroke-linecap="round" stroke-linejoin="round"/></svg>
<div style="position:absolute;left:215.5px;top:104px;width:1px;height:23px;background:#d6d6d6;"></div>
<span class="t" style="left:222.2px;top:107.0px;font-size:16px;line-height:16px;color:#444;letter-spacing:0.00px;">A</span>
<svg style="position:absolute;left:232.6px;top:107px;" width="6" height="4" viewBox="0 0 6 4"><path d="M0.7 3.3L3 0.9L5.3 3.3" fill="none" stroke="#1e7fd6" stroke-width="1.2"/></svg>
<span class="t" style="left:249.0px;top:108.0px;font-size:13px;line-height:16px;color:#444;letter-spacing:0.00px;">A</span>
<svg style="position:absolute;left:258px;top:107.5px;" width="6" height="4" viewBox="0 0 6 4"><path d="M0.7 0.7L3 3.1L5.3 0.7" fill="none" stroke="#1e7fd6" stroke-width="1.2"/></svg>
<svg style="position:absolute;left:129px;top:132px;" width="16" height="16" viewBox="0 0 16 16">
<path d="M0.8 0.8H15.2M0.8 0.8V15M15.2 0.8V15M8 0.8V15M0.8 8H15.2" stroke="#666" stroke-width="1" stroke-dasharray="1 1.2" fill="none"/>
<path d="M0.3 15H15.7" stroke="#3b3b3b" stroke-width="1.3"/>
</svg>
<svg style="position:absolute;left:0;top:0;overflow:visible" width="1" height="1"><path d="M153.15 140.05 L155 141.95 L156.85 140.05" fill="none" stroke="#555" stroke-width="1.15" stroke-linecap="round" stroke-linejoin="round"/></svg>
<div style="position:absolute;left:165.5px;top:129px;width:1px;height:23px;background:#d6d6d6;"></div>
<svg style="position:absolute;left:171px;top:131px;" width="17" height="13" viewBox="0 0 17 13">
<path d="M6.2 1.2L11.6 6.6L7 11.2Q6.2 11.8 5.4 11.2L1.8 7.6Q1.2 6.8 1.8 6Z" fill="#fbfbfb" stroke="#3b3b3b" stroke-width="1" stroke-linejoin="round"/>
<path d="M6.2 1.2V4.6" stroke="#3b3b3b" stroke-width="1"/>
<path d="M12.2 5.2Q14.6 7.8 13.4 10.6" fill="none" stroke="#1e7fd6" stroke-width="1.4"/>
</svg>
<div style="position:absolute;left:171.7px;top:144.7px;width:15px;height:3.3px;background:#ffeb0a;"></div>
<svg style="position:absolute;left:0;top:0;overflow:visible" width="1" height="1"><path d="M196.15 140.05 L198 141.95 L199.85 140.05" fill="none" stroke="#555" stroke-width="1.15" stroke-linecap="round" stroke-linejoin="round"/></svg>
<span class="t" style="left:214.2px;top:130.0px;font-size:14.5px;line-height:16px;color:#444;letter-spacing:0.00px;">A</span>
<div style="position:absolute;left:211px;top:144.7px;width:16px;height:3.3px;background:#e8161e;"></div>
<svg style="position:absolute;left:0;top:0;overflow:visible" width="1" height="1"><path d="M236.15 140.05 L238 141.95 L239.85 140.05" fill="none" stroke="#555" stroke-width="1.15" stroke-linecap="round" stroke-linejoin="round"/></svg>
<span class="t" style="left:169.1px;top:154.0px;font-size:11.5px;line-height:16px;color:#3b3b3b;letter-spacing:-0.11px;">Шрифт</span>
<svg style="position:absolute;left:263px;top:158px;" width="8" height="8" viewBox="0 0 8 8"><path d="M0.5 5V0.5H5" fill="none" stroke="#666" stroke-width="1"/><path d="M2.6 2.6L7 7M7 3.8V7H3.8" fill="none" stroke="#666" stroke-width="1"/></svg>
<svg style="position:absolute;left:315px;top:87px;" width="14" height="13" viewBox="0 0 14 13"><path d="M0 0.9H14M1.6 4.7H12.4M0 8.5H14M1.6 12.3H12.4" stroke="#444" stroke-width="1.1"/></svg>
<span class="t" style="left:282.1px;top:113.5px;font-size:12px;line-height:16px;color:#3b3b3b;letter-spacing:-0.28px;">Выравнивание</span>
<svg style="position:absolute;left:0;top:0;overflow:visible" width="1" height="1"><path d="M320.15 135.05 L322 136.95 L323.85 135.05" fill="none" stroke="#555" stroke-width="1.15" stroke-linecap="round" stroke-linejoin="round"/></svg>
<span class="t" style="left:387.8px;top:86.3px;font-size:17.5px;line-height:16px;color:#444;letter-spacing:0.24px;">%</span>
<span class="t" style="left:378.6px;top:113.5px;font-size:12px;line-height:16px;color:#3b3b3b;letter-spacing:-0.18px;">Число</span>
<svg style="position:absolute;left:0;top:0;overflow:visible" width="1" height="1"><path d="M393.65 135.05 L395.5 136.95 L397.35 135.05" fill="none" stroke="#555" stroke-width="1.15" stroke-linecap="round" stroke-linejoin="round"/></svg>
<svg style="position:absolute;left:433px;top:83px;" width="17" height="15" viewBox="0 0 17 15">
<rect x="0.5" y="0.5" width="15.2" height="13.6" fill="#fff" stroke="#555" stroke-width="1"/>
<rect x="3.4" y="1" width="5.4" height="3.6" fill="#ee4b52"/>
<rect x="8.8" y="4.4" width="2.4" height="2.6" fill="#ee4b52"/>
<rect x="3.4" y="5" width="2.8" height="4.2" fill="#2b88d8"/>
<rect x="3.4" y="9.6" width="7.8" height="3.8" fill="#f26b72"/>
<path d="M0.5 4.8H15.7M0.5 9.4H15.7M3.4 0.5V14M11.6 0.5V14" stroke="#666" stroke-width="0.7"/>
</svg>
<svg style="position:absolute;left:433px;top:109px;" width="16" height="16" viewBox="0 0 16 16">
<rect x="0.5" y="0.5" width="14" height="13.5" fill="#fff" stroke="#555" stroke-width="1"/>
<path d="M0.5 4.5H14.5M0.5 9H14.5M5 0.5V14M9.8 0.5V14" stroke="#555" stroke-width="0.8" stroke-dasharray="1.6 0.8"/>
<path d="M5.5 9.5H14.5V14.5H5.5Z" fill="#2b88d8"/>
<path d="M14.6 3.2L8.6 10.4L7 14.2L10.6 12.2L16 5Z" fill="#e9eef5" stroke="#444" stroke-width="0.9" stroke-linejoin="round"/>
<path d="M7 14.2L9 10.2L10.8 12Z" fill="#2b88d8"/>
</svg>
<svg style="position:absolute;left:433px;top:134px;" width="16" height="16" viewBox="0 0 16 16">
<rect x="0.5" y="0.5" width="14" height="13.5" fill="#fff" stroke="#555" stroke-width="1"/>
<path d="M0.5 4.5H14.5M5 0.5V14" stroke="#777" stroke-width="0.8" stroke-dasharray="1.6 0.8"/>
<path d="M3 3H12V8L7 13H3Z" fill="#5aa5e6"/>
<path d="M14.6 3.2L8.6 10.4L7 14.2L10.6 12.2L16 5Z" fill="#e9eef5" stroke="#444" stroke-width="0.9" stroke-linejoin="round"/>
<path d="M7 14.2L9 10.2L10.8 12Z" fill="#2b88d8"/>
</svg>
<span class="t" style="left:453.1px;top:83.0px;font-size:12px;line-height:16px;color:#3b3b3b;letter-spacing:-0.20px;">Условное форматирование</span>
<svg style="position:absolute;left:0;top:0;overflow:visible" width="1" height="1"><path d="M605.65 90.05 L607.5 91.95 L609.35 90.05" fill="none" stroke="#555" stroke-width="1.15" stroke-linecap="round" stroke-linejoin="round"/></svg>
<span class="t" style="left:453.1px;top:108.0px;font-size:12px;line-height:16px;color:#3b3b3b;letter-spacing:-0.20px;">Форматировать как таблицу</span>
<svg style="position:absolute;left:0;top:0;overflow:visible" width="1" height="1"><path d="M609.15 115.05 L611 116.95 L612.85 115.05" fill="none" stroke="#555" stroke-width="1.15" stroke-linecap="round" stroke-linejoin="round"/></svg>
<span class="t" style="left:453.1px;top:133.0px;font-size:12px;line-height:16px;color:#3b3b3b;letter-spacing:-0.27px;">Стили ячеек</span>
<svg style="position:absolute;left:0;top:0;overflow:visible" width="1" height="1"><path d="M523.65 140.05 L525.5 141.95 L527.35 140.05" fill="none" stroke="#555" stroke-width="1.15" stroke-linecap="round" stroke-linejoin="round"/></svg>
<span class="t" style="left:510.6px;top:154.0px;font-size:11.5px;line-height:16px;color:#3b3b3b;letter-spacing:-0.47px;">Стили</span>
<div style="position:absolute;left:631.5px;top:77px;width:55.5px;height:92px;background:#e9e9e9;border:1px solid #9e9e9e;border-radius:4px;box-sizing:border-box;"></div>
<svg style="position:absolute;left:650px;top:85px;" width="17" height="17" viewBox="0 0 17 17">
<path d="M3.6 2H13.6M3.6 0.8V3M13.6 0.8V3" stroke="#2b88d8" stroke-width="1"/>
<rect x="0.9" y="3.6" width="15.2" height="12.8" fill="#fff" stroke="#666" stroke-width="0.9"/>
<rect x="5.4" y="7.4" width="6" height="5" fill="#4a9eea" stroke="#2b7fd0" stroke-width="0.8"/>
<path d="M0.9 7.4H16.1M0.9 12.4H16.1M5.4 3.6V16.4M11.4 3.6V16.4" stroke="#666" stroke-width="0.8"/>
<rect x="5.4" y="7.4" width="6" height="5" fill="#4a9eea" stroke="#2b7fd0" stroke-width="0.8"/>
</svg>
<span class="t" style="left:638.6px;top:113.8px;font-size:12px;line-height:16px;color:#3b3b3b;letter-spacing:-0.24px;">Ячейки</span>
<svg style="position:absolute;left:0;top:0;overflow:visible" width="1" height="1"><path d="M656.15 135.05 L658 136.95 L659.85 135.05" fill="none" stroke="#555" stroke-width="1.15" stroke-linecap="round" stroke-linejoin="round"/></svg>
<svg style="position:absolute;left:730px;top:85.2px;" width="17" height="17" viewBox="0 0 17 17"><circle cx="10.6" cy="6.2" r="4.8" fill="none" stroke="#444" stroke-width="1.1"/><path d="M7.2 9.8L1 16" stroke="#444" stroke-width="1.2" stroke-linecap="round"/></svg>
<span class="t" style="left:694.0px;top:113.8px;font-size:12px;line-height:16px;color:#3b3b3b;letter-spacing:-0.32px;">Редактирование</span>
<svg style="position:absolute;left:0;top:0;overflow:visible" width="1" height="1"><path d="M735.85 135.05 L737.7 136.95 L739.5500000000001 135.05" fill="none" stroke="#555" stroke-width="1.15" stroke-linecap="round" stroke-linejoin="round"/></svg>
<svg style="position:absolute;left:809px;top:154px;" width="14" height="9" viewBox="0 0 14 9"><path d="M0.8 1L7 7.6L13.2 1" fill="none" stroke="#444" stroke-width="1.1"/></svg>
<svg style="position:absolute;left:14px;top:182px;" width="16" height="16" viewBox="0 0 16 16">
<path d="M1 1H13L15 3V15H1Z" fill="#d9a3e3" stroke="#a63fb8" stroke-width="1.3" stroke-linejoin="round"/>
<path d="M4 1V6H11.5V1" fill="#fbf2fc" stroke="#a63fb8" stroke-width="1.1"/>
<path d="M4 15V10H12V15" fill="#fbf2fc" stroke="#a63fb8" stroke-width="1.1"/>
</svg>
<span class="t" style="left:33.6px;top:181.0px;font-size:12px;line-height:16px;color:#3b3b3b;letter-spacing:-0.37px;">Сохранить</span>
<svg style="position:absolute;left:107px;top:181px;" width="16" height="17" viewBox="0 0 16 17"><path d="M1.2 1.2V6.8H6.8" fill="none" stroke="#3b3b3b" stroke-width="1.1"/><path d="M1.6 6.4Q5 1.6 10 2.4Q14.6 3.6 14.4 8Q14 11.4 9 14L6.6 16" fill="none" stroke="#3b3b3b" stroke-width="1.1"/></svg>
<span class="t" style="left:127.1px;top:181.0px;font-size:12px;line-height:16px;color:#3b3b3b;letter-spacing:-0.32px;">Отменить</span>
<svg style="position:absolute;left:0;top:0;overflow:visible" width="1" height="1"><path d="M190.65 188.55 L192.5 190.45 L194.35 188.55" fill="none" stroke="#555" stroke-width="1.15" stroke-linecap="round" stroke-linejoin="round"/></svg>
<svg style="position:absolute;left:206px;top:181px;" width="16" height="17" viewBox="0 0 16 17"><path d="M14.8 1.2V6.8H9.2" fill="none" stroke="#b0b0b0" stroke-width="1.1"/><path d="M14.4 6.4Q11 1.6 6 2.4Q1.4 3.6 1.6 8Q2 11.4 7 14L9.4 16" fill="none" stroke="#b0b0b0" stroke-width="1.1"/></svg>
<span class="t" style="left:226.1px;top:181.0px;font-size:12px;line-height:16px;color:#a6a6a6;letter-spacing:-0.42px;">Вернуть</span>
<svg style="position:absolute;left:0;top:0;overflow:visible" width="1" height="1"><path d="M280.65 188.55 L282.5 190.45 L284.35 188.55" fill="none" stroke="#b0b0b0" stroke-width="1.15" stroke-linecap="round" stroke-linejoin="round"/></svg>
<svg style="position:absolute;left:297px;top:181px;" width="13" height="17" viewBox="0 0 13 17">
<rect x="0.6" y="0.6" width="11.8" height="15.8" rx="1" fill="#fff" stroke="#3b3b3b" stroke-width="1.1"/>
<rect x="2.6" y="2.6" width="7.8" height="3" fill="#2b88d8"/>
<path d="M2.6 8H4.6M5.6 8H7.6M8.6 8H10.4M2.6 10.5H4.6M5.6 10.5H7.6M8.6 10.5H10.4M2.6 13H4.6M5.6 13H7.6M8.6 13H10.4" stroke="#3b3b3b" stroke-width="1.4"/>
</svg>
<span class="t" style="left:314.6px;top:181.0px;font-size:12px;line-height:16px;color:#3b3b3b;letter-spacing:-0.11px;">Другая</span>
<svg style="position:absolute;left:369px;top:182px;" width="16" height="14" viewBox="0 0 16 14"><path d="M1 3.2H4.2L5.4 1H10.6L11.8 3.2H15V13H1Z" fill="none" stroke="#3b3b3b" stroke-width="1.1" stroke-linejoin="round"/><circle cx="8" cy="8" r="2.8" fill="none" stroke="#3b3b3b" stroke-width="1.1"/></svg>
<span class="t" style="left:388.1px;top:181.0px;font-size:12px;line-height:16px;color:#3b3b3b;letter-spacing:-0.11px;">Камера</span>
<svg style="position:absolute;left:449px;top:184px;" width="10" height="9" viewBox="0 0 10 9"><path d="M0.8 0.8H9.2" stroke="#555" stroke-width="1"/><path d="M1.6 3.6L5 7.4L8.4 3.6Z" fill="none" stroke="#555" stroke-width="1" stroke-linejoin="round"/></svg>
<div style="position:absolute;left:631px;top:169.5px;width:163.5px;height:90px;background:#fefefe;border:1px solid #e0e0e0;border-radius:5px;box-sizing:border-box;box-shadow:0 2px 6px rgba(0,0,0,0.18);"></div>
<div style="position:absolute;left:741px;top:171.5px;width:46px;height:72.5px;background:#c8c8c8;border-radius:4px;"></div>
<svg style="position:absolute;left:647px;top:178px;" width="33" height="23" viewBox="0 0 33 23">
<rect x="2.6" y="0.7" width="27.2" height="21" fill="#fff" stroke="#555" stroke-width="1"/>
<path d="M11.6 0.7V21.7M20.7 0.7V21.7M2.6 7.4H29.8M2.6 15H29.8" stroke="#555" stroke-width="0.9"/>
<rect x="10.4" y="7.4" width="21.2" height="7.6" fill="#5aa5e6" stroke="#2b7fd0" stroke-width="0.9"/>
<path d="M21.6 7.4V15" stroke="#2b7fd0" stroke-width="0.9"/>
<path d="M0.8 11.2L6.8 5.6V8.8H13.6V13.6H6.8V16.8Z" fill="#fff" stroke="#2b7fd0" stroke-width="1" stroke-linejoin="round"/>
</svg>
<span class="t" style="left:639.6px;top:208.0px;font-size:12px;line-height:16px;color:#3b3b3b;letter-spacing:-0.42px;">Вставить</span>
<svg style="position:absolute;left:0;top:0;overflow:visible" width="1" height="1"><path d="M661.15 230.55 L663 232.45 L664.85 230.55" fill="none" stroke="#555" stroke-width="1.15" stroke-linecap="round" stroke-linejoin="round"/></svg>
<svg style="position:absolute;left:701px;top:178px;" width="31" height="23" viewBox="0 0 31 23">
<path d="M0.6 0.7H27.4V21.7H0.6V15H4.6V7.4H0.6Z" fill="#fff" stroke="#555" stroke-width="1"/>
<path d="M9.6 0.7V21.7M18.6 0.7V7.4M18.6 15V21.7M4.6 7.4H27.4M4.6 15H27.4" stroke="#555" stroke-width="0.9"/>
<rect x="4.6" y="7.4" width="12.4" height="7.6" fill="#5aa5e6" stroke="#2b7fd0" stroke-width="0.9"/>
<path d="M13 7.4V15" stroke="#2b7fd0" stroke-width="0.9"/>
<rect x="17.4" y="6" width="11.6" height="10.6" fill="#fefefe"/>
<path d="M17.4 6.4L28.8 17M28.8 6.4L17.4 17" stroke="#f0575f" stroke-width="1.4"/>
</svg>
<span class="t" style="left:693.6px;top:208.0px;font-size:12px;line-height:16px;color:#3b3b3b;letter-spacing:-0.43px;">Удалить</span>
<svg style="position:absolute;left:0;top:0;overflow:visible" width="1" height="1"><path d="M713.15 230.55 L715 232.45 L716.85 230.55" fill="none" stroke="#555" stroke-width="1.15" stroke-linecap="round" stroke-linejoin="round"/></svg>
<svg style="position:absolute;left:750px;top:172.5px;" width="29" height="28" viewBox="0 0 29 28">
<path d="M6.4 2.6H22M6.4 1V4.2M22 1V4.2" stroke="#2b7fd0" stroke-width="1"/>
<rect x="0.8" y="6.2" width="27" height="21" fill="#fff" stroke="#555" stroke-width="1"/>
<path d="M0.8 12.9H27.8M0.8 20.5H27.8M7.6 6.2V27.2M20.6 6.2V27.2" stroke="#555" stroke-width="0.9"/>
<rect x="7.6" y="12.9" width="13" height="7.6" fill="#5aa5e6" stroke="#2b7fd0" stroke-width="0.9"/>
</svg>
<span class="t" style="left:742.6px;top:207.6px;font-size:12px;line-height:16px;color:#222;letter-spacing:-0.09px;">Формат</span>
<svg style="position:absolute;left:0;top:0;overflow:visible" width="1" height="1"><path d="M762.15 229.55 L764 231.45 L765.85 229.55" fill="none" stroke="#555" stroke-width="1.15" stroke-linecap="round" stroke-linejoin="round"/></svg>
<div style="position:absolute;left:576px;top:244.6px;width:255.7px;height:377.6px;background:#fff;border:1px solid #cdcdcd;border-radius:4px;box-sizing:border-box;box-shadow:0 3px 8px rgba(0,0,0,0.22);overflow:hidden;"></div>
<div style="position:absolute;left:577px;top:245.4px;width:253.7px;height:23.200000000000017px;background:#e9e9e9;border-radius:3px 3px 0 0;"></div>
<span class="t" style="left:585.1px;top:249.0px;font-size:12px;line-height:16px;color:#505050;letter-spacing:-0.13px;font-weight:700;">Размер ячейки</span>
<span class="t" style="left:608.0px;top:274.3px;font-size:12px;line-height:16px;color:#4a4a4a;letter-spacing:-0.25px;">В<u>ы</u>сота строки...</span>
<span class="t" style="left:608.0px;top:297.5px;font-size:12px;line-height:16px;color:#4a4a4a;letter-spacing:-0.11px;"><u>А</u>втоподбор высоты строки</span>
<div style="position:absolute;left:608px;top:317.5px;width:220px;height:1px;background:#e4e4e4;"></div>
<span class="t" style="left:608.0px;top:322.5px;font-size:12px;line-height:16px;color:#4a4a4a;letter-spacing:-0.21px;">Ш<u>и</u>рина столбца...</span>
<span class="t" style="left:608.0px;top:345.8px;font-size:12px;line-height:16px;color:#4a4a4a;letter-spacing:-0.09px;">Автопод<u>б</u>ор ширины столбца</span>
<span class="t" style="left:608.0px;top:369.0px;font-size:12px;line-height:16px;color:#4a4a4a;letter-spacing:-0.02px;">Ширина по умолчани<u>ю</u>...</span>
<div style="position:absolute;left:577px;top:389.5px;width:253.7px;height:21.5px;background:#e9e9e9;"></div>
<span class="t" style="left:585.1px;top:392.2px;font-size:12px;line-height:16px;color:#505050;letter-spacing:-0.51px;font-weight:700;">Видимость</span>
<div style="position:absolute;left:577px;top:410.8px;width:253.7px;height:23.4px;background:#c8c8c8;"></div>
<span class="t" style="left:608.0px;top:414.5px;font-size:12px;line-height:16px;color:#222;letter-spacing:-0.20px;">Скрыт<u>ь</u> или отобразить</span>
<svg style="position:absolute;left:816px;top:418px;" width="5" height="9" viewBox="0 0 5 9"><path d="M0.5 0.5V8.5L4.5 4.5Z" fill="#444"/></svg>
<div style="position:absolute;left:577px;top:434.2px;width:253.7px;height:22.600000000000023px;background:#e9e9e9;"></div>
<span class="t" style="left:585.1px;top:437.5px;font-size:12px;line-height:16px;color:#505050;letter-spacing:-0.46px;font-weight:700;">Упорядочить листы</span>
<span class="t" style="left:608.0px;top:460.5px;font-size:12px;line-height:16px;color:#4a4a4a;letter-spacing:-0.26px;"><u>П</u>ереименовать лист</span>
<span class="t" style="left:608.0px;top:483.7px;font-size:12px;line-height:16px;color:#4a4a4a;letter-spacing:-0.20px;">Пере<u>м</u>естить или скопировать лист...</span>
<span class="t" style="left:608.0px;top:506.7px;font-size:12px;line-height:16px;color:#4a4a4a;letter-spacing:-0.18px;"><u>Ц</u>вет ярлычка</span>
<svg style="position:absolute;left:816px;top:510.5px;" width="5" height="9" viewBox="0 0 5 9"><path d="M0.5 0.5V8.5L4.5 4.5Z" fill="#444"/></svg>
<div style="position:absolute;left:577px;top:527px;width:253.7px;height:22px;background:#e9e9e9;"></div>
<span class="t" style="left:585.1px;top:530.0px;font-size:12px;line-height:16px;color:#505050;letter-spacing:-0.41px;font-weight:700;">Защита</span>
<span class="t" style="left:608.0px;top:552.7px;font-size:12px;line-height:16px;color:#4a4a4a;letter-spacing:-0.17px;">Защитить <u>л</u>ист...</span>
<span class="t" style="left:608.0px;top:575.7px;font-size:12px;line-height:16px;color:#4a4a4a;letter-spacing:-0.18px;"><u>Б</u>локировать ячейку</span>
<div style="position:absolute;left:608px;top:596px;width:220px;height:1px;background:#e4e4e4;"></div>
<span class="t" style="left:608.0px;top:600.7px;font-size:12px;line-height:16px;color:#4a4a4a;letter-spacing:-0.23px;">Формат <u>я</u>чеек...</span>
<svg style="position:absolute;left:580.5px;top:275px;" width="17" height="15" viewBox="0 0 17 15">
<path d="M2.6 1.4V5.4M2.6 9V13" fill="none" stroke="#2b88d8" stroke-width="1.1"/><path d="M0.6 3.4L2.6 1.2L4.6 3.4M0.6 11L2.6 13.2L4.6 11" fill="none" stroke="#2b88d8" stroke-width="1.1"/>
<path d="M6.8 0.9H13.6Q14.8 0.9 14.8 2.1V12Q14.8 13.2 13.6 13.2H6.8" fill="none" stroke="#444" stroke-width="1.1"/>
</svg>
<svg style="position:absolute;left:580.5px;top:324px;" width="17" height="16" viewBox="0 0 17 16">
<path d="M1.4 13H5.6M10.4 13H14.6M3.4 11L1.2 13L3.4 15M12.6 11L14.8 13L12.6 15" fill="none" stroke="#2b88d8" stroke-width="1.1"/>
<path d="M1.4 8V2Q1.4 0.8 2.6 0.8H13.4Q14.6 0.8 14.6 2V8" fill="none" stroke="#444" stroke-width="1.1"/>
</svg>
<svg style="position:absolute;left:579.8px;top:460.5px;" width="17" height="16" viewBox="0 0 17 16">
<rect x="0.6" y="0.8" width="13.4" height="12.4" fill="#fff" stroke="#444" stroke-width="1"/>
<path d="M0.6 4.6H14M0.6 8.6H9M4.8 0.8V13.2M9.4 0.8V8" stroke="#444" stroke-width="0.9"/>
<path d="M14.4 5.2L16.2 7L9.6 14.2L6.8 15.2L7.6 12.4Z" fill="#3a96e8" stroke="#1e6fc0" stroke-width="0.7" stroke-linejoin="round"/>
</svg>
<svg style="position:absolute;left:579.8px;top:553px;" width="17" height="16" viewBox="0 0 17 16">
<rect x="0.6" y="0.8" width="13.4" height="12.4" fill="#fff" stroke="#444" stroke-width="1"/>
<path d="M0.6 4.6H14M0.6 8.6H9M4.8 0.8V13.2M9.4 0.8V8M0.6 11H7" stroke="#444" stroke-width="0.9"/>
<rect x="8.8" y="9.8" width="7" height="5.6" rx="0.8" fill="#fde3b8" stroke="#ee8f1c" stroke-width="1.2"/>
<path d="M10.2 9.6V7.8Q10.2 6 12.3 6Q14.4 6 14.4 7.8V9.6" fill="none" stroke="#e8912d" stroke-width="1.2"/>
</svg>
<div style="position:absolute;left:579px;top:574.4px;width:19px;height:18.8px;background:#c6c6c6;border:1px solid #9c9c9c;box-sizing:border-box;"></div>
<svg style="position:absolute;left:582px;top:576.2px;" width="13" height="15" viewBox="0 0 13 15">
<rect x="1.2" y="6.4" width="10.6" height="7.6" rx="0.8" fill="#fff" stroke="#333" stroke-width="1.1"/>
<path d="M3.4 6.4V3.8Q3.4 1 6.5 1Q9.6 1 9.6 3.8V6.4" fill="none" stroke="#333" stroke-width="1.1"/>
</svg>
<svg style="position:absolute;left:582.2px;top:600.5px;" width="12" height="17" viewBox="0 0 12 17">
<rect x="0.6" y="1" width="10.8" height="15.4" rx="1" fill="#fff" stroke="#444" stroke-width="1"/>
<path d="M3.2 5.8H5.2V7.4H3.2ZM3.2 10H5.2V11.6H3.2Z" fill="none" stroke="#444" stroke-width="0.8"/>
<path d="M6.6 6.6H8.6M6.6 10.8H8.6" stroke="#444" stroke-width="0.9"/>
</svg>
<div style="position:absolute;left:418.8px;top:411px;width:156px;height:144px;background:#fff;border:1px solid #d4d4d4;border-radius:5px;box-sizing:border-box;box-shadow:0 3px 8px rgba(0,0,0,0.22);"></div>
<span class="t" style="left:451.1px;top:417.0px;font-size:12px;line-height:16px;color:#4a4a4a;letter-spacing:-0.10px;">Скрыть строк<u>и</u></span>
<span class="t" style="left:451.1px;top:440.2px;font-size:12px;line-height:16px;color:#4a4a4a;letter-spacing:-0.23px;"><u>С</u>крыть столбцы</span>
<span class="t" style="left:451.1px;top:463.2px;font-size:12px;line-height:16px;color:#4a4a4a;letter-spacing:-0.25px;">Скрыть лис<u>т</u></span>
<div style="position:absolute;left:451px;top:483.3px;width:122px;height:1px;background:#e4e4e4;"></div>
<span class="t" style="left:451.1px;top:488.8px;font-size:12px;line-height:16px;color:#4a4a4a;letter-spacing:-0.22px;"><u>О</u>тобразить строки</span>
<span class="t" style="left:451.1px;top:512.0px;font-size:12px;line-height:16px;color:#4a4a4a;letter-spacing:-0.23px;">По<u>к</u>азать столбцы</span>
<span class="t" style="left:451.1px;top:534.7px;font-size:12px;line-height:16px;color:#b3b3b3;letter-spacing:-0.27px;">Отобра<u>з</u>ить лист...</span>
<div style="position:absolute;left:423.4px;top:407.8px;width:144px;height:38px;border:4.3px solid #0a0a0a;border-radius:10px;box-sizing:border-box;box-shadow:0 2px 5px rgba(0,0,0,0.45), inset 0 0 4px rgba(0,0,0,0.4);"></div>
</body></html>
